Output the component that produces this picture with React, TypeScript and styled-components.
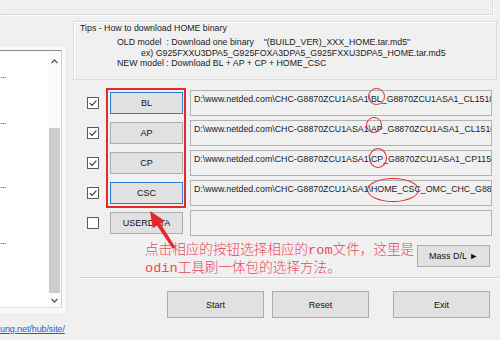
import React from "react";
import styled, { createGlobalStyle } from "styled-components";

const GlobalStyle = createGlobalStyle`
  html, body { margin: 0; padding: 0; background: #f0f0f0; }
  body { font-family: "Liberation Sans", Arial, sans-serif; }
`;

const Root = styled.div`
  width: 500px;
  height: 340px;
  overflow: hidden;
  background: #f0f0f0;
  display: flex;
  flex-direction: column;
  font-family: "Liberation Sans", Arial, sans-serif;
  color: #1b1b1b;
`;

const TopPanel = styled.div`
  flex: none;
  width: 492px;
  height: 14px;
  border-bottom: 1px solid #dadada;
  border-right: 1px solid #dadada;
  box-shadow: 1px 1px 0 #fff;
`;

const Main = styled.div`
  flex: 1;
  min-height: 0;
  display: flex;
`;

const LeftCol = styled.div`
  flex: none;
  width: 68px;
  display: flex;
  flex-direction: column;
  padding-top: 32px;
`;

const ListFrame = styled.div`
  width: 67px;
  height: 266px;
  box-sizing: border-box;
  padding-top: 3px;
  background: #f9f9f9;
  border-right: 1px solid #e4e4e4;
`;

const ListBox = styled.div`
  width: 62px;
  height: 258px;
  box-sizing: border-box;
  display: flex;
  background: #fff;
  border-top: 1px solid #8c8c8c;
  border-right: 1px solid #d4d4d4;
  border-bottom: 1px solid #e2e2e2;
`;

const ListItems = styled.div`
  flex: 1;
  display: flex;
  flex-direction: column;
  font-size: 9px;
  line-height: 10px;
  color: #333;
  overflow: hidden;
`;

const ListItem = styled.div<{ $gap: number }>`
  margin-top: ${(p) => p.$gap}px;
  white-space: nowrap;
  letter-spacing: -0.5px;
`;

const Scrollbar = styled.div`
  width: 13px;
  display: flex;
  flex-direction: column;
  background: #fafafa;
`;

const ScrollArrow = styled.div<{ $h: number }>`
  height: ${(p) => p.$h}px;
  display: flex;
  align-items: center;
  justify-content: center;
`;

const ScrollTrack = styled.div<{ $h: number }>`
  height: ${(p) => p.$h}px;
`;

const ScrollThumb = styled.div`
  height: 165px;
  background: #cdcdcd;
  margin: 0 1px;
`;

const Link = styled.a`
  margin-top: 10px;
  font-size: 9px;
  line-height: 12px;
  color: #1c62c4;
  text-decoration: underline;
  white-space: nowrap;
  letter-spacing: -0.1px;
`;

const RightCol = styled.div`
  flex: 1;
  display: flex;
  flex-direction: column;
`;

const TipsBox = styled.div`
  margin: 6px 0 0 5px;
  width: 424px;
  height: 59px;
  box-sizing: border-box;
  border: 1px solid #dcdcdc;
  box-shadow: inset 1px 1px 0 #fff;
  padding: 1px 0 0 6px;
  font-size: 8.8px;
  line-height: 10.6px;
`;

const TipLine = styled.div<{ $indent: number; $after?: number }>`
  margin-left: ${(p) => p.$indent}px;
  margin-bottom: ${(p) => p.$after ?? 0}px;
  white-space: pre;
`;

const Rows = styled.div`
  position: relative;
  margin-top: 8px;
  padding-left: 19px;
  display: flex;
  flex-direction: column;
`;

const Row = styled.div`
  height: 30px;
  display: flex;
  align-items: center;
`;

const CheckBox = styled.span`
  flex: none;
  width: 12px;
  height: 12px;
  box-sizing: border-box;
  border: 1px solid #5a5a5a;
  background: #fff;
  margin-right: 11px;
  display: flex;
  align-items: center;
  justify-content: center;
`;

const Button = styled.div<{ $w: number; $h: number; $focus?: boolean }>`
  flex: none;
  width: ${(p) => p.$w}px;
  height: ${(p) => p.$h}px;
  box-sizing: border-box;
  background: #e1e1e1;
  border: 1px solid ${(p) => (p.$focus ? "#2a7fd4" : "#adadad")};
  display: flex;
  align-items: center;
  justify-content: center;
  font-size: 9px;
  color: #111;
  white-space: nowrap;
`;

const FileButton = styled(Button)`
  margin-right: 7px;
`;

const Field = styled.div`
  flex: none;
  width: 302px;
  height: 26px;
  box-sizing: border-box;
  border: 1px solid #b2b2b2;
  background: #f0f0f0;
  padding: 3px 3px 0 3px;
  font-size: 8.8px;
  line-height: 11px;
  white-space: nowrap;
  overflow: hidden;
  color: #1b1b1b;
`;

const RedBox = styled.div`
  position: absolute;
  left: 38px;
  top: 0;
  width: 80px;
  height: 120px;
  box-sizing: border-box;
  border: 2px solid #e42a2a;
  pointer-events: none;
`;

const Ring = styled.div<{ $x: number; $y: number; $w: number; $h: number }>`
  position: absolute;
  left: ${(p) => p.$x}px;
  top: ${(p) => p.$y}px;
  width: ${(p) => p.$w}px;
  height: ${(p) => p.$h}px;
  box-sizing: border-box;
  border: 1.5px solid #e2262c;
  border-radius: 50%;
`;

const Arrow = styled.svg`
  position: absolute;
  left: 75px;
  top: 118px;
  width: 40px;
  height: 50px;
  overflow: visible;
`;

const NoteArea = styled.div`
  height: 39px;
  display: flex;
  align-items: flex-start;
`;

const Note = styled.div`
  flex: 1;
  min-width: 0;
  margin-left: 77px;
  padding-top: 4px;
  font-family: "Liberation Mono", "Noto Sans CJK SC", monospace;
  font-size: 13.6px;
  font-weight: 300;
  line-height: 18px;
  color: #e8475c;
`;

const NoteLine = styled.div`
  white-space: nowrap;
`;

const MassButton = styled(Button)`
  margin: 7px 10px 0 0;
`;

const Separator = styled.div`
  margin-left: 12px;
  border-top: 1px solid #d2d2d2;
  border-bottom: 1px solid #fcfcfc;
`;

const ActionBar = styled.div`
  display: flex;
  margin-top: 12px;
  padding-left: 99px;
`;

const ActionButton = styled(Button)<{ $gap: number }>`
  margin-left: ${(p) => p.$gap}px;
`;

const Check = () => (
  <svg width="10" height="10" viewBox="0 0 10 10">
    <polyline points="1.8,5.2 4,7.4 8.4,2.6" fill="none" stroke="#333" strokeWidth="1.1" />
  </svg>
);

const Chevron = ({ up }: { up: boolean }) => (
  <svg width="7" height="5" viewBox="0 0 7 5">
    <polyline
      points={up ? "0.5,4.2 3.5,1 6.5,4.2" : "0.5,0.8 3.5,4 6.5,0.8"}
      fill="none"
      stroke="#555"
      strokeWidth="1.2"
    />
  </svg>
);

const prefix = "D:\\www.netded.com\\CHC-G8870ZCU1ASA1\\";

const rows = [
  { label: "BL", checked: true, focus: true, path: prefix + "BL_G8870ZCU1ASA1_CL15109325_QB7083658_REV00_user_low_ship.tar.md5" },
  { label: "AP", checked: true, focus: false, path: prefix + "AP_G8870ZCU1ASA1_CL15109325_QB7083658_REV00_user_low_ship.tar.md5" },
  { label: "CP", checked: true, focus: false, path: prefix + "CP_G8870ZCU1ASA1_CP11569842_CL15109325_REV00_user_low_ship.tar.md5" },
  { label: "CSC", checked: true, focus: true, path: prefix + "HOME_CSC_OMC_CHC_G8870ZCU1ASA1_CL15109325_QB7083658_REV00.tar.md5" },
  { label: "USERDATA", checked: false, focus: false, path: "" },
];

export default function App() {
  return (
    <>
      <GlobalStyle />
      <Root>
        <TopPanel />
        <Main>
          <LeftCol>
            <ListFrame>
              <ListBox>
                <ListItems>
                  <ListItem $gap={19}>...</ListItem>
                  <ListItem $gap={36}>...</ListItem>
                  <ListItem $gap={54}>...</ListItem>
                  <ListItem $gap={46}>...</ListItem>
                </ListItems>
                <Scrollbar>
                  <ScrollArrow $h={20}>
                    <Chevron up />
                  </ScrollArrow>
                  <ScrollTrack $h={57} />
                  <ScrollThumb />
                  <ScrollArrow $h={14}>
                    <Chevron up={false} />
                  </ScrollArrow>
                </Scrollbar>
              </ListBox>
            </ListFrame>
            <Link>ung.net/hub/site/</Link>
          </LeftCol>
          <RightCol>
            <TipsBox>
              <TipLine $indent={0} $after={3.4}>Tips - How to download HOME binary</TipLine>
              <TipLine $indent={37}>{'OLD model  : Download one binary    "(BUILD_VER)_XXX_HOME.tar.md5"'}</TipLine>
              <TipLine $indent={61}>ex) G925FXXU3DPA5_G925FOXA3DPA5_G925FXXU3DPA5_HOME.tar.md5</TipLine>
              <TipLine $indent={37}>NEW model : Download BL + AP + CP + HOME_CSC</TipLine>
            </TipsBox>
            <Rows>
              {rows.map((r) => (
                <Row key={r.label}>
                  <CheckBox>{r.checked && <Check />}</CheckBox>
                  <FileButton $w={73} $h={22} $focus={r.focus}>
                    {r.label}
                  </FileButton>
                  <Field>{r.path}</Field>
                </Row>
              ))}
              <RedBox />
              <Ring $x={300} $y={0} $w={17} $h={17} />
              <Ring $x={298} $y={29} $w={16} $h={16} />
              <Ring $x={301} $y={60} $w={18} $h={20} />
              <Ring $x={299} $y={90} $w={52} $h={24} />
              <Arrow viewBox="0 0 40 50">
                <polygon
                  points="7,5 21.6,14.7 17.4,17.4 32.4,41.2 29.6,42.8 14,19.6 9.8,22.3"
                  fill="#e6262b"
                />
              </Arrow>
            </Rows>
            <NoteArea>
              <Note>
                <NoteLine>点击相应的按钮选择相应的rom文件，这里是</NoteLine>
                <NoteLine>odin工具刷一体包的选择方法。</NoteLine>
              </Note>
              <MassButton $w={73} $h={22}>
                Mass D/L ►
              </MassButton>
            </NoteArea>
            <Separator />
            <ActionBar>
              <ActionButton $w={97} $h={27} $gap={0}>Start</ActionButton>
              <ActionButton $w={97} $h={27} $gap={8}>Reset</ActionButton>
              <ActionButton $w={97} $h={27} $gap={24}>Exit</ActionButton>
            </ActionBar>
          </RightCol>
        </Main>
      </Root>
    </>
  );
}
